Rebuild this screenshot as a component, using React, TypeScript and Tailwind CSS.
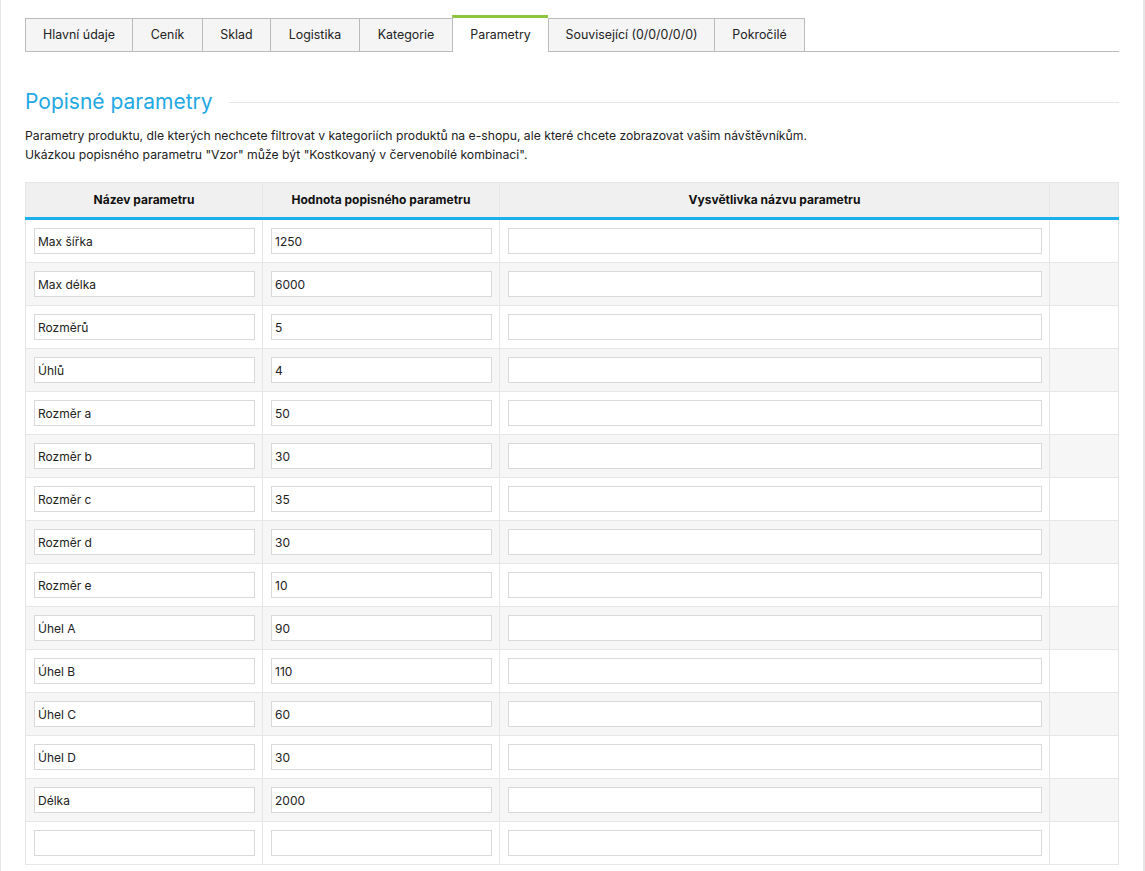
import React from "react";

const tabs = [
  { label: "Hlavní údaje", w: "w-[107px]" },
  { label: "Ceník", w: "w-[70px]" },
  { label: "Sklad", w: "w-[68px]" },
  { label: "Logistika", w: "w-[89px]" },
  { label: "Kategorie", w: "w-[93px]" },
  { label: "Parametry", w: "w-[96px]", active: true },
  { label: "Související (0/0/0/0/0)", w: "w-[166px]" },
  { label: "Pokročilé", w: "w-[91px]", last: true },
];

const rows: [string, string][] = [
  ["Max šířka", "1250"],
  ["Max délka", "6000"],
  ["Rozměrů", "5"],
  ["Úhlů", "4"],
  ["Rozměr a", "50"],
  ["Rozměr b", "30"],
  ["Rozměr c", "35"],
  ["Rozměr d", "30"],
  ["Rozměr e", "10"],
  ["Úhel A", "90"],
  ["Úhel B", "110"],
  ["Úhel C", "60"],
  ["Úhel D", "30"],
  ["Délka", "2000"],
  ["", ""],
];

function Field({ value }: { value: string }) {
  return (
    <input
      defaultValue={value}
      className="block w-full h-[26px] border border-[#d9d9d9] bg-white px-[3px] text-[12px] text-[#222] outline-none"
    />
  );
}

export default function App() {
  return (
    <div
      className="min-h-[871px] border-l border-r-2 border-[#e6e6e6] bg-white px-6 pt-[15px] pb-6 text-[#222]"
      style={{ fontFamily: "Inter, 'Noto Sans', sans-serif" }}
    >
      {/* Tabs */}
      <div className="flex items-end border-b border-[#bbbbbb]">
        {tabs.map((t) =>
          t.active ? (
            <div
              key={t.label}
              className={`${t.w} relative z-10 -mb-px flex h-[37px] items-center justify-center border-l border-t-[3px] border-l-[#bbbbbb] border-t-[#8cc63f] bg-white pt-px text-[12.4px] text-[#222]`}
            >
              {t.label}
            </div>
          ) : (
            <div
              key={t.label}
              className={`${t.w} flex h-[33px] items-center justify-center border-l border-t border-[#bbbbbb] bg-[#f5f5f5] pt-px text-[12.4px] text-[#222] ${t.last ? "border-r" : ""}`}
            >
              {t.label}
            </div>
          )
        )}
      </div>

      {/* Heading */}
      <div className="mt-[36px] flex items-center gap-4">
        <h2 className="text-[21px] leading-[28px] font-normal text-[#22a8e2]">Popisné parametry</h2>
        <div className="h-px flex-1 bg-[#e6e6e6]" />
      </div>

      <p className="mt-[10px] text-[12.2px] leading-[19px] text-[#222]">
        Parametry produktu, dle kterých nechcete filtrovat v kategoriích produktů na e-shopu, ale které chcete zobrazovat vašim návštěvníkům.
        <br />
        Ukázkou popisného parametru "Vzor" může být "Kostkovaný v červenobílé kombinaci".
      </p>

      {/* Table */}
      <table className="mt-[18px] w-full table-fixed border-collapse border border-[#e6e6e6] text-[12px]">
        <colgroup>
          <col className="w-[237px]" />
          <col className="w-[237px]" />
          <col className="w-[550px]" />
          <col />
        </colgroup>
        <thead>
          <tr className="h-[36px] bg-[#f0f0f0] border-b-[3px] border-b-[#1bb0ec]">
            <th className="border-r border-[#e6e6e6] text-center font-bold text-[#111]">Název parametru</th>
            <th className="border-r border-[#e6e6e6] text-center font-bold text-[#111]">Hodnota popisného parametru</th>
            <th className="border-r border-[#e6e6e6] text-center font-bold text-[#111]">Vysvětlivka názvu parametru</th>
            <th />
          </tr>
        </thead>
        <tbody>
          {rows.map(([name, val], i) => (
            <tr key={i} className={`border-b border-[#e6e6e6] ${i % 2 === 1 ? "bg-[#f6f6f6]" : "bg-white"}`}>
              <td className="border-r border-[#e6e6e6] pl-2 pr-[7px] py-2">
                <Field value={name} />
              </td>
              <td className="border-r border-[#e6e6e6] pl-2 pr-[7px] py-2">
                <Field value={val} />
              </td>
              <td className="border-r border-[#e6e6e6] pl-2 pr-[7px] py-2">
                <Field value="" />
              </td>
              <td />
            </tr>
          ))}
        </tbody>
      </table>
    </div>
  );
}
